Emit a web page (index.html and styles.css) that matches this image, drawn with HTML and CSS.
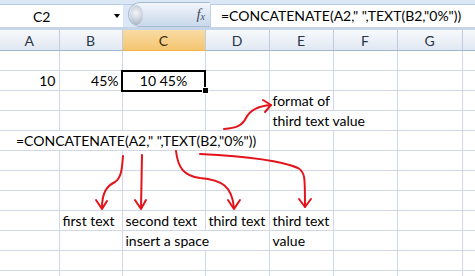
FILE: index.html
```html
<!DOCTYPE html>
<html lang="en">
<head>
  <meta charset="UTF-8">
  <title>CONCATENATE with TEXT</title>
  <link rel="stylesheet" href="styles.css">
</head>
<body>
  <div class="sheet">
    <div class="ribbon-edge"></div>

    <div class="formula-bar">
      <div class="name-box">
        <span class="cell-ref">C2</span>
        <span class="drop"></span>
      </div>
      <div class="fx-pill">
        <span class="grip"></span>
        <span class="fx">f<sub>x</sub></span>
      </div>
      <div class="formula">=CONCATENATE(A2," ",TEXT(B2,"0%"))</div>
    </div>

    <div class="grid-wrap">
      <table class="grid">
        <colgroup>
          <col class="w-a"><col class="w-b"><col class="w-c"><col class="w-d">
          <col class="w-e"><col class="w-f"><col class="w-g"><col class="w-h">
        </colgroup>
        <thead>
          <tr>
            <th>A</th><th>B</th><th class="active">C</th><th>D</th>
            <th>E</th><th>F</th><th>G</th><th></th>
          </tr>
        </thead>
        <tbody>
          <tr><td></td><td></td><td></td><td></td><td></td><td></td><td></td><td></td></tr>
          <tr>
            <td class="num">10</td>
            <td class="num">45%</td>
            <td class="selected">10 45%</td>
            <td></td><td></td><td></td><td></td><td></td>
          </tr>
          <tr><td></td><td></td><td></td><td></td><td>format of</td><td></td><td></td><td></td></tr>
          <tr><td></td><td></td><td></td><td></td><td colspan="2">third text value</td><td></td><td></td></tr>
          <tr><td colspan="4" class="indent">=CONCATENATE(A2," ",TEXT(B2,"0%"))</td><td></td><td></td><td></td><td></td></tr>
          <tr><td></td><td></td><td></td><td></td><td></td><td></td><td></td><td></td></tr>
          <tr><td></td><td></td><td></td><td></td><td></td><td></td><td></td><td></td></tr>
          <tr><td></td><td></td><td></td><td></td><td></td><td></td><td></td><td></td></tr>
          <tr><td></td><td>first text</td><td>second text</td><td>third text</td><td>third text</td><td></td><td></td><td></td></tr>
          <tr><td></td><td></td><td colspan="2">insert a space</td><td>value</td><td></td><td></td><td></td></tr>
          <tr><td></td><td></td><td></td><td></td><td></td><td></td><td></td><td></td></tr>
          <tr><td></td><td></td><td></td><td></td><td></td><td></td><td></td><td></td></tr>
        </tbody>
      </table>
    </div>

    <!-- hand-drawn annotation arrows -->
    <svg class="arrows" width="475" height="276" viewBox="0 0 475 276">
      <g fill="none" stroke="#e3141b" stroke-width="2" stroke-linecap="round" stroke-linejoin="round">
        <path d="M224,129 C236,128 242,126 246,118 C250,110 258,106 271,105"/>
        <path d="M263,100 L271,105 L265,112"/>

        <path d="M123,156 C122,170 121,178 115,182 C107,186 102,192 102,208"/>
        <path d="M96,200 L102,209 L107,201"/>

        <path d="M142,155 L141,208"/>
        <path d="M135,200 L141,209 L146,200"/>

        <path d="M176,151 C178,168 184,176 200,178 C222,180 232,186 234,208"/>
        <path d="M228,200 L234,209 L240,200"/>

        <path d="M200,154 C240,156 280,160 298,168 C305,172 305,176 305,207"/>
        <path d="M299,199 L305,207 L311,199"/>
      </g>
    </svg>
  </div>
</body>
</html>
```

FILE: styles.css
```css
:root {
  --grid-line: #d0d7e5;
  --band: #dce7f5;
  --head-top: #f7f9fc;
  --head-bottom: #e1e8f2;
  --head-line: #c0cddf;
}

body {
  margin: 0;
  background: #ffffff;
  font-family: Lato, "Liberation Sans", sans-serif;
  font-size: 14px;
  color: #000000;
}

.sheet {
  position: relative;
  width: 475px;
  height: 276px;
  overflow: hidden;
}

.ribbon-edge {
  height: 4px;
  background: var(--band);
  border-bottom: 1px solid #b8cbe2;
}

/* formula bar */
.formula-bar {
  display: flex;
  height: 22px;
  background: var(--band);
  border-bottom: 3px solid #c6d5e8;
}

.name-box {
  display: flex;
  align-items: center;
  width: 123px;
  background: #ffffff;
}

.cell-ref {
  padding-left: 33px;
  flex: 1;
}

.drop {
  width: 0;
  height: 0;
  margin-right: 3px;
  border-left: 3.5px solid transparent;
  border-right: 3.5px solid transparent;
  border-top: 4px solid #000000;
}

.fx-pill {
  display: flex;
  align-items: center;
  justify-content: space-between;
  width: 82px;
  margin: -3px 0 0 5px;
  height: 25px;
  box-sizing: border-box;
  border: 1px solid #a7bbd4;
  border-right: none;
  border-radius: 13px 0 0 13px;
  background: linear-gradient(#f2f6fb, #dbe5f2 55%, #c9d8eb);
}

.grip {
  width: 13px;
  height: 20px;
  margin-left: 1px;
  border-radius: 50%;
  background: radial-gradient(circle at 45% 40%, #f4f6f9, #b9c3cf 70%, #9aa7b6);
}

.fx {
  margin-right: 5px;
  font-family: "Liberation Serif", serif;
  font-style: italic;
  font-size: 15px;
  color: #3f4d60;
}

.fx sub {
  font-size: 10px;
  vertical-align: -1px;
}

.formula {
  flex: 1;
  background: #ffffff;
  border-left: 1px solid #c2d0e2;
  padding-left: 10px;
  line-height: 22px;
  white-space: nowrap;
}

/* sheet grid */
.grid-wrap {
  width: 475px;
  overflow: hidden;
}

.grid {
  table-layout: fixed;
  width: 520px;
  border-collapse: collapse;
}

.w-a { width: 59px; }
.w-b { width: 63px; }
.w-c { width: 83px; }
.w-d { width: 64px; }
.w-e { width: 64px; }
.w-f { width: 64px; }
.w-g { width: 65px; }
.w-h { width: 58px; }

.grid th {
  height: 20px;
  padding: 0;
  font-weight: normal;
  color: #27364a;
  background: linear-gradient(var(--head-top), var(--head-bottom));
  border-right: 1px solid var(--head-line);
  border-bottom: 1px solid #9eb6ce;
}

.grid th.active {
  background: linear-gradient(#f9dba4, #f3c571);
  border-bottom-color: #f2b547;
  color: #3b2a08;
}

.grid td {
  height: 18px;
  padding: 0 3px 1px;
  border-right: 1px solid var(--grid-line);
  border-bottom: 1px solid var(--grid-line);
  vertical-align: bottom;
  white-space: nowrap;
  overflow: visible;
}

.grid td.num {
  text-align: right;
}

.grid td.indent {
  padding-left: 16px;
}

.grid td.selected {
  position: relative;
  text-align: center;
  outline: 2px solid #000000;
  outline-offset: -1px;
}

.grid td.selected::after {
  content: "";
  position: absolute;
  right: -4px;
  bottom: -4px;
  width: 5px;
  height: 5px;
  background: #000000;
  border: 1px solid #ffffff;
}

.arrows {
  position: absolute;
  top: 0;
  left: 0;
  pointer-events: none;
}
```
